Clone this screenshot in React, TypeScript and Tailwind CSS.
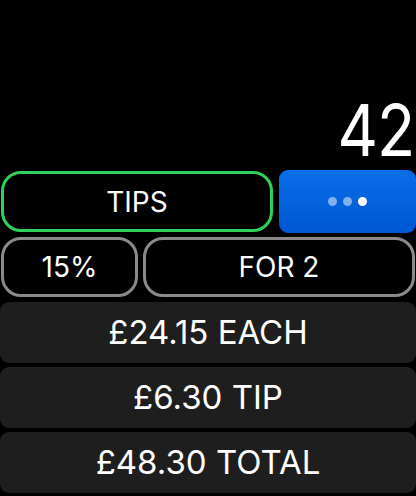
import React from "react";

export default function App() {
  const font = { fontFamily: "Inter, 'Noto Sans', sans-serif" };
  return (
    <div className="w-[416px] h-[496px] bg-black text-white flex flex-col overflow-hidden" style={font}>
      <div className="h-[170px] flex items-end justify-end pr-[2px] pb-[4px]">
        <span className="text-[72px] leading-none font-normal tracking-[-1px] scale-x-[0.87] origin-right inline-block">42</span>
      </div>
      <div className="h-[63px] flex items-center gap-[6px]">
        <button className="ml-[1px] w-[272px] h-[61px] rounded-[20px] border-[3px] border-[#30d158] flex items-center justify-center text-[28px] leading-none">
          TIPS
        </button>
        <button className="flex-1 h-[63px] rounded-[9px] bg-gradient-to-b from-[#0b6ee9] to-[#0057d2] flex items-center justify-center gap-[6px]">
          <span className="w-[9px] h-[9px] rounded-full bg-white/50" />
          <span className="w-[9px] h-[9px] rounded-full bg-white/50" />
          <span className="w-[9px] h-[9px] rounded-full bg-white" />
        </button>
      </div>
      <div className="mt-[4px] h-[60px] flex gap-[5px] px-[1px]">
        <button className="w-[137px] h-full rounded-[20px] border-[3px] border-[#8a8a8a] flex items-center justify-center text-[28px] leading-none">
          15%
        </button>
        <button className="flex-1 h-full rounded-[20px] border-[3px] border-[#8a8a8a] flex items-center justify-center text-[28px] leading-none">
          FOR 2
        </button>
      </div>
      <div className="mt-[5px] flex flex-col gap-[4px]">
        {["£24.15 EACH", "£6.30 TIP", "£48.30 TOTAL"].map((t) => (
          <div key={t} className="h-[61px] rounded-[9px] bg-[#1e1e1e] flex items-center justify-center text-[33px] leading-none">
            {t}
          </div>
        ))}
      </div>
    </div>
  );
}
